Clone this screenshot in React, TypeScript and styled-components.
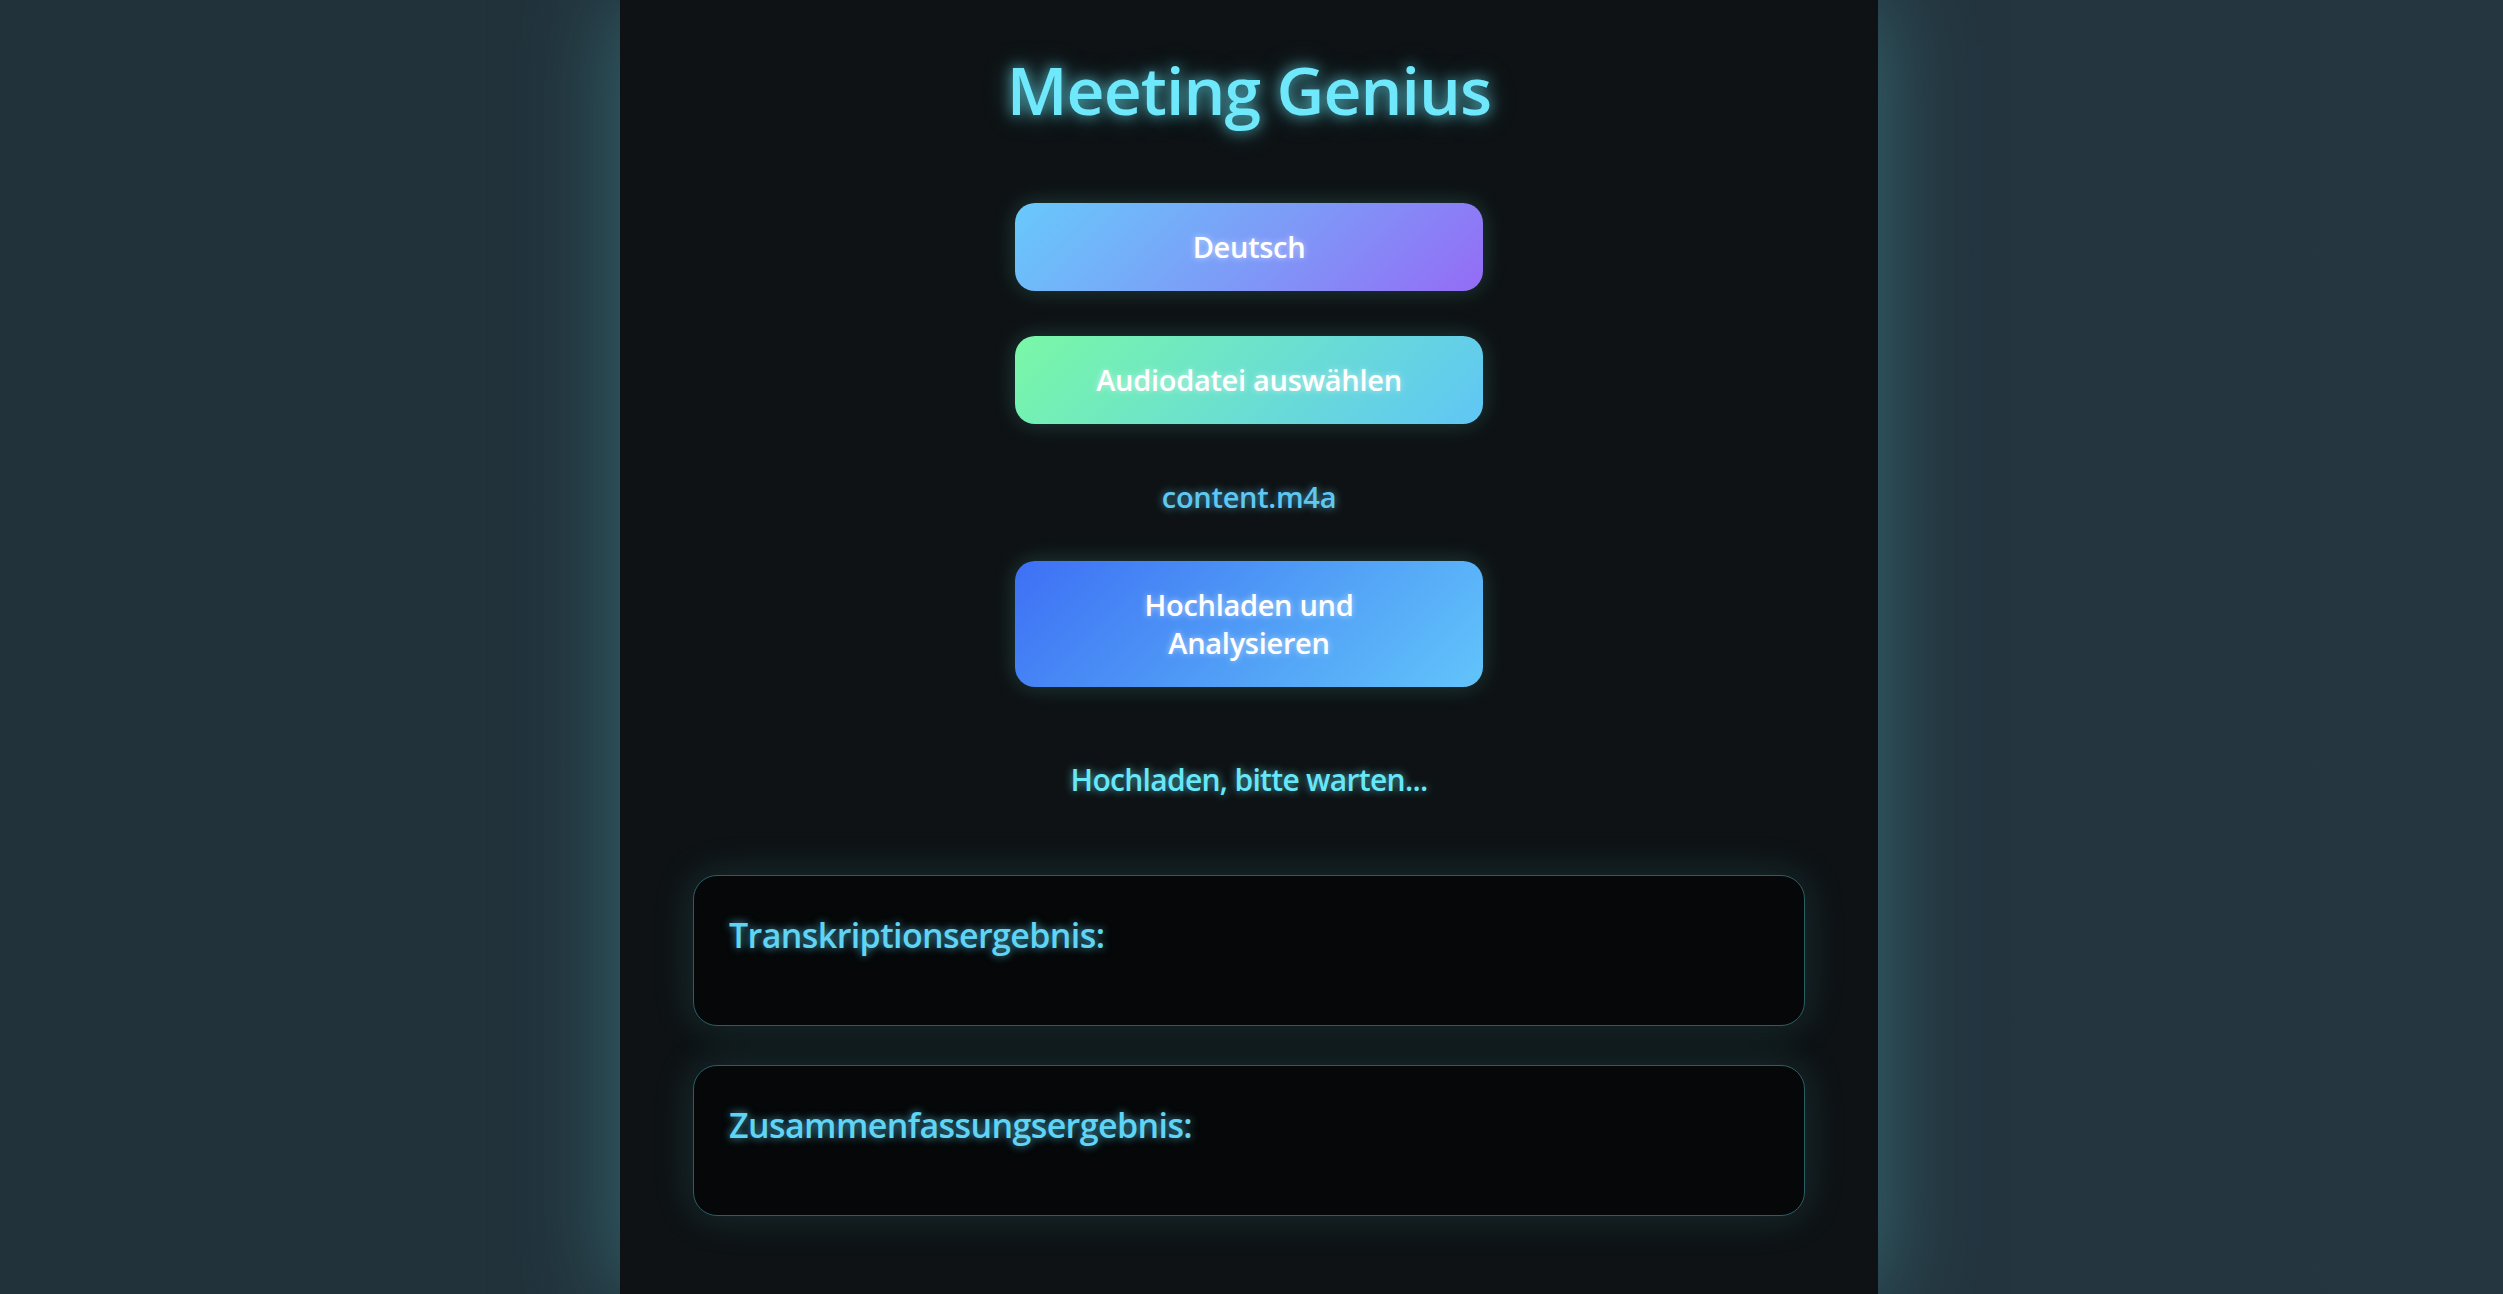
import React from "react";
import styled, { createGlobalStyle } from "styled-components";

const GlobalStyle = createGlobalStyle`
  html, body {
    margin: 0;
    padding: 0;
  }
  body {
    min-height: 100vh;
    background: linear-gradient(90deg, #21323a 0%, #22333c 50%, #253641 100%);
    font-family: "Open Sans", "Noto Sans", sans-serif;
  }
  * { box-sizing: border-box; }
`;

const Shell = styled.div`
  display: flex;
  justify-content: center;
  min-height: 100vh;
  padding-right: 5px;
`;

const Column = styled.main`
  width: 1258px;
  min-height: 1294px;
  background: #0e1214;
  box-shadow: 0 0 90px rgba(74, 160, 170, 0.5);
  padding: 49px 73px 80px;
  display: flex;
  flex-direction: column;
  align-items: center;
`;

const Title = styled.h1`
  margin: 0 0 74px;
  font-size: 66px;
  line-height: 80px;
  font-weight: 600;
  letter-spacing: -0.9px;
  color: #6ee8fa;
  text-shadow: 0 0 14px rgba(103, 232, 249, 0.75), 0 0 28px rgba(103, 232, 249, 0.35);
`;

const ActionButton = styled.button<{ $bg: string; $gap: number }>`
  width: 468px;
  margin: 0 0 ${(p) => p.$gap}px;
  padding: 25px 80px;
  border: none;
  border-radius: 20px;
  background: ${(p) => p.$bg};
  color: #ffffff;
  font-family: "Open Sans", "Noto Sans", sans-serif;
  font-size: 29px;
  line-height: 38px;
  font-weight: 600;
  letter-spacing: -0.3px;
  text-align: center;
  cursor: pointer;
  text-shadow: 0 0 6px rgba(255, 255, 255, 0.55);
  box-shadow: 0 0 22px rgba(100, 220, 210, 0.22);
`;

const FileName = styled.p`
  margin: 0 0 46px;
  font-size: 29px;
  line-height: 36px;
  font-weight: 600;
  letter-spacing: -0.3px;
  color: #5ec8f2;
  text-shadow: 0 0 8px rgba(94, 200, 242, 0.7);
`;

const Status = styled.p`
  margin: 0 0 77px;
  font-size: 30px;
  line-height: 37px;
  font-weight: 600;
  letter-spacing: -0.7px;
  color: #67e8f9;
  text-shadow: 0 0 8px rgba(103, 232, 249, 0.7);
`;

const ResultCard = styled.section<{ $gap: number }>`
  align-self: stretch;
  min-height: 151px;
  margin-bottom: ${(p) => p.$gap}px;
  padding: 37px 35px;
  background: #050708;
  border: 1px solid #2b5d64;
  border-radius: 24px;
  box-shadow: 0 0 40px rgba(80, 190, 205, 0.18);
`;

const CardTitle = styled.h3`
  margin: 0;
  font-size: 34px;
  line-height: 44px;
  font-weight: 600;
  letter-spacing: -0.6px;
  color: #5fd4f5;
  text-shadow: 0 0 8px rgba(95, 212, 245, 0.75);
`;

const CardBody = styled.div`
  min-height: 0;
  color: #d7f6fb;
`;

export default function App() {
  return (
    <>
      <GlobalStyle />
      <Shell>
        <Column>
          <Title>Meeting Genius</Title>
          <ActionButton $gap={45} $bg="linear-gradient(135deg, #68c9fb 0%, #7e98f7 55%, #946cf5 100%)">
            Deutsch
          </ActionButton>
          <ActionButton $gap={55} $bg="linear-gradient(135deg, #7af8a6 0%, #6be0cf 50%, #60c6f6 100%)">
            Audiodatei auswählen
          </ActionButton>
          <FileName>content.m4a</FileName>
          <ActionButton $gap={74} $bg="linear-gradient(135deg, #3e70f5 0%, #4f9bf6 50%, #62c4fa 100%)">
            Hochladen und Analysieren
          </ActionButton>
          <Status>Hochladen, bitte warten...</Status>
          <ResultCard $gap={39}>
            <CardTitle>Transkriptionsergebnis:</CardTitle>
            <CardBody />
          </ResultCard>
          <ResultCard $gap={0}>
            <CardTitle>Zusammenfassungsergebnis:</CardTitle>
            <CardBody />
          </ResultCard>
        </Column>
      </Shell>
    </>
  );
}
